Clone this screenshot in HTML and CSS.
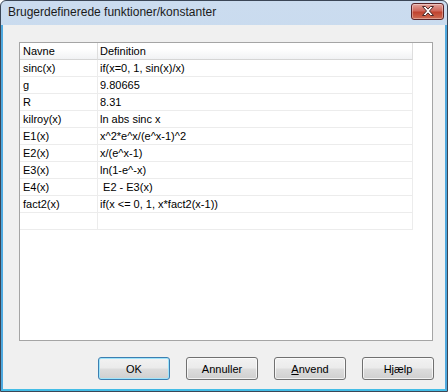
FILE: index.html
```html
<!DOCTYPE html>
<html>
<head>
    <meta charset="utf-8">
    <title>Brugerdefinerede funktioner/konstanter</title>
    <link rel="stylesheet" href="styles.css">
</head>
<body>

<div class="window">
    <div class="titlebar">
        <span class="title">Brugerdefinerede funktioner/konstanter</span>
        <button class="close-btn" aria-label="Luk">
            <svg width="14" height="10" viewBox="0 0 14 10">
                <path d="M1.5 0.5h3l2.5 2.6 2.5-2.6h3l-4 4.5 4 4.5h-3l-2.5-2.6-2.5 2.6h-3l4-4.5z" fill="#fff" stroke="#4a2a2a" stroke-width="1" stroke-linejoin="round"/>
            </svg>
        </button>
    </div>

    <div class="client">
        <div class="listbox">
            <div class="grid">
                <div class="cell head">Navne</div>
                <div class="cell head">Definition</div>

                <div class="cell">sinc(x)</div>
                <div class="cell">if(x=0, 1, sin(x)/x)</div>
                <div class="cell">g</div>
                <div class="cell">9.80665</div>
                <div class="cell">R</div>
                <div class="cell">8.31</div>
                <div class="cell">kilroy(x)</div>
                <div class="cell">ln abs sinc x</div>
                <div class="cell">E1(x)</div>
                <div class="cell">x^2*e^x/(e^x-1)^2</div>
                <div class="cell">E2(x)</div>
                <div class="cell">x/(e^x-1)</div>
                <div class="cell">E3(x)</div>
                <div class="cell">ln(1-e^-x)</div>
                <div class="cell">E4(x)</div>
                <div class="cell">&nbsp;E2 - E3(x)</div>
                <div class="cell">fact2(x)</div>
                <div class="cell">if(x &lt;= 0, 1, x*fact2(x-1))</div>
                <div class="cell"></div>
                <div class="cell"></div>
            </div>
        </div>

        <div class="buttons">
            <button class="btn default">OK</button>
            <button class="btn">Annuller</button>
            <button class="btn"><u>A</u>nvend</button>
            <button class="btn">Hjælp</button>
        </div>
    </div>
</div>

</body>
</html>
```

FILE: styles.css
```css
body {
    margin: 0;
    padding: 0;
    font-family: "Liberation Sans", Arial, sans-serif;
    font-size: 11px;
    color: #000;
    background: #fff;
}

.window {
    width: 448px;
    height: 392px;
    box-sizing: border-box;
    border: 1px solid #3b4656;
    border-radius: 6px 6px 0 0;
    display: flex;
    flex-direction: column;
    overflow: hidden;
    background: linear-gradient(#cbdcef, #b9d0e9);
}

.titlebar {
    height: 24px;
    display: flex;
    justify-content: space-between;
    align-items: center;
    padding: 0 3px 0 7px;
}

.title {
    font-size: 12px;
    color: #1a1a1a;
    margin-top: -3px;
}

.close-btn {
    width: 33px;
    height: 17px;
    margin-top: -4px;
    padding: 0;
    border: 1px solid #5a2327;
    border-radius: 3px;
    background: linear-gradient(#e3a59d, #d0685c 45%, #c0432f 55%, #cf6d55);
    box-shadow: inset 0 0 0 1px rgba(255, 255, 255, 0.35);
    display: flex;
    justify-content: center;
    align-items: center;
}

.client {
    flex: 1;
    background: #f0f0f0;
    border-left: 2px solid #4fa9df;
    border-right: 2px solid #4fa9df;
    border-bottom: 2px solid #44bde6;
    padding: 17px 12px 9px 16px;
    display: flex;
    flex-direction: column;
}

.listbox {
    height: 299px;
    box-sizing: border-box;
    border: 1px solid #a5a5a5;
    background: #fff;
}

.grid {
    display: grid;
    grid-template-columns: 78px 315px;
    grid-auto-rows: 17px;
}

.cell {
    box-sizing: border-box;
    border-right: 1px solid #ececec;
    border-bottom: 1px solid #ececec;
    padding: 0 2px 0 3px;
    line-height: 16px;
    white-space: nowrap;
}

.cell:nth-child(even) {
    padding-left: 2px;
}

.head {
    background: linear-gradient(#fff 35%, #f1f2f4);
    border-bottom: 1px solid #d5d5d5;
    border-right-color: #dedede;
}

.buttons {
    margin-top: 16px;
    display: flex;
    justify-content: flex-end;
    gap: 16px;
    margin-right: -1px;
}

.btn {
    width: 72px;
    height: 23px;
    padding: 0;
    font-family: "Liberation Sans", Arial, sans-serif;
    font-size: 11px;
    color: #000;
    border: 1px solid #707070;
    border-radius: 3px;
    background: linear-gradient(#f2f2f2, #ebebeb 48%, #dddddd 52%, #cfcfcf);
    box-shadow: inset 0 0 0 1px rgba(255, 255, 255, 0.7);
}

.btn.default {
    border-color: #3c7fb1;
    box-shadow: inset 0 0 0 1px #9fe4fb;
}
```
